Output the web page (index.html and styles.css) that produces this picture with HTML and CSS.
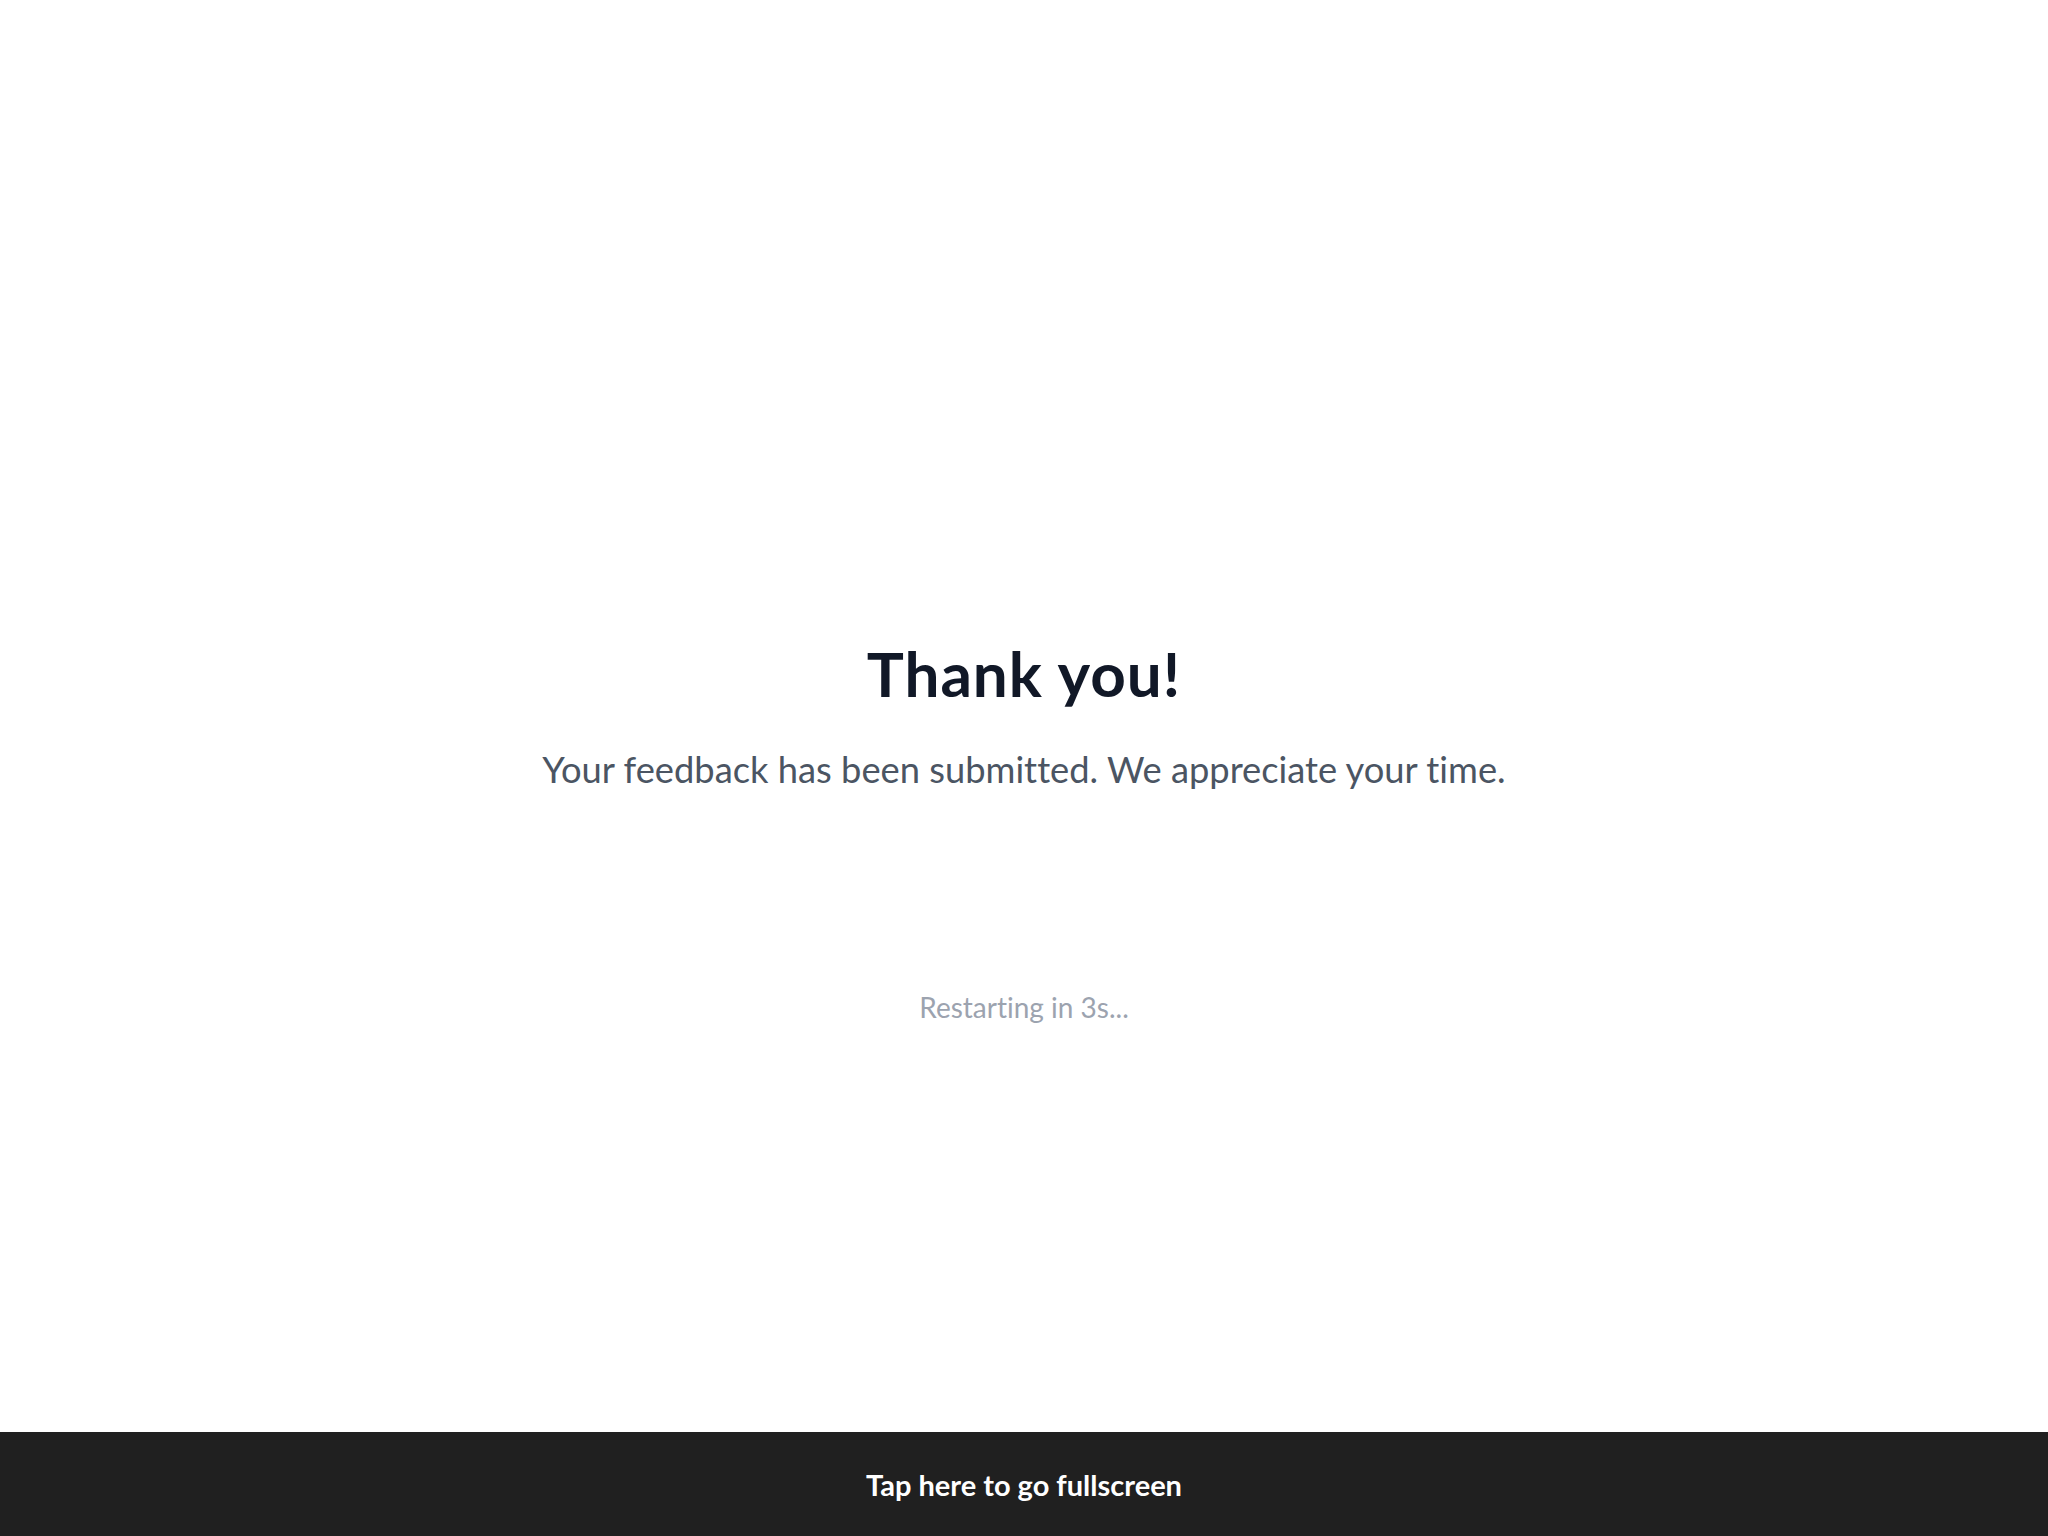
FILE: index.html
```html
<!DOCTYPE html>
<html lang="en">
<head>
<meta charset="utf-8">
<title>Thank you</title>
<link rel="stylesheet" href="styles.css">
</head>
<body>
<div class="screen">
  <main class="content">
    <h1 class="title">Thank you!</h1>
    <p class="subtitle">Your feedback has been submitted. We appreciate your time.</p>
    <p class="countdown">Restarting in 3s...</p>
  </main>
  <div class="fullscreen-bar">Tap here to go fullscreen</div>
</div>
</body>
</html>
```

FILE: styles.css
```css
html, body {
  margin: 0;
  padding: 0;
  background: #ffffff;
}
body {
  font-family: Lato, "Open Sans", "Noto Sans", sans-serif;
  font-variant-ligatures: none;
}
.screen {
  width: 2048px;
  height: 1536px;
  display: flex;
  flex-direction: column;
}
.content {
  flex: 1;
  display: flex;
  flex-direction: column;
  align-items: center;
  padding-top: 637px;
  box-sizing: border-box;
}
.title {
  margin: 0;
  font-size: 62px;
  line-height: 72px;
  font-weight: 700;
  letter-spacing: 1px;
  color: #111827;
}
.subtitle {
  margin: 39px 0 0;
  font-size: 36.3px;
  line-height: 43px;
  font-weight: 400;
  color: #4b5563;
}
.countdown {
  margin: 199px 0 0;
  font-size: 28px;
  line-height: 34px;
  color: #9ca3af;
}
.fullscreen-bar {
  height: 104px;
  background: #202020;
  color: #ffffff;
  display: flex;
  align-items: center;
  justify-content: center;
  font-size: 29px;
  font-weight: 700;
}
```
